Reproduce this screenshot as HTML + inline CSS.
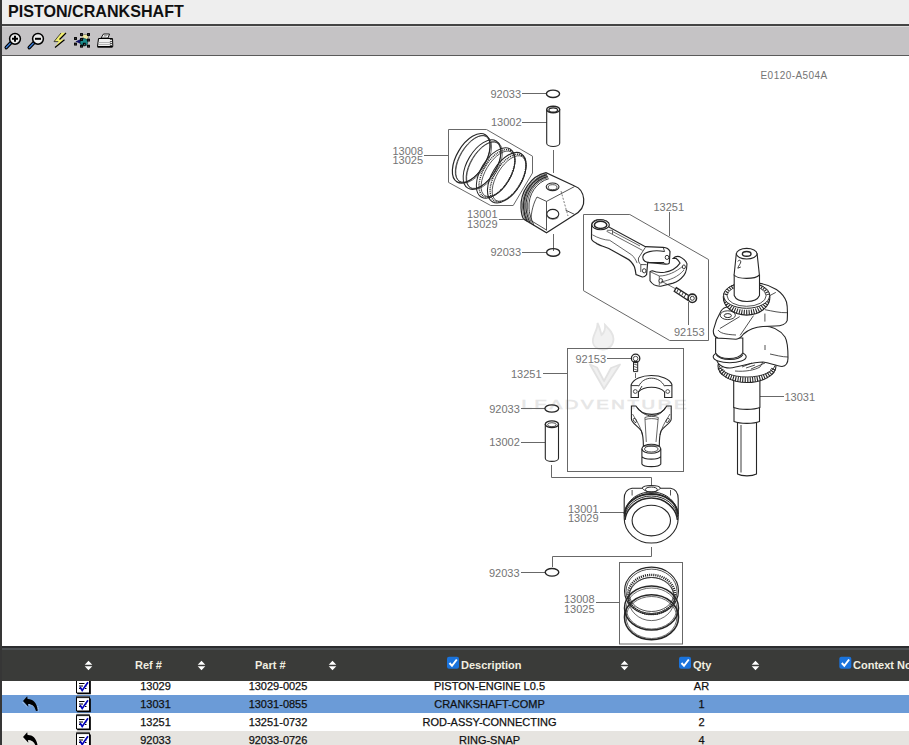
<!DOCTYPE html>
<html><head><meta charset="utf-8">
<style>
html,body{margin:0;padding:0;}
body{width:909px;height:745px;overflow:hidden;position:relative;background:#fff;font-family:"Liberation Sans",sans-serif;}
.abs{position:absolute;}
#lb{left:0;top:0;width:2px;height:745px;background:#363636;z-index:5;}
#title{left:0;top:0;width:909px;height:24px;background:#eeeeee;}
#title span{position:absolute;left:8px;top:2px;font-weight:bold;font-size:16.1px;color:#111;line-height:19px;}
#tl1{left:0;top:24px;width:909px;height:2px;background:#444;}
#tl2{left:0;top:26px;width:909px;height:1px;background:#dcdcdc;}
#tb{left:0;top:27px;width:909px;height:28px;background:#c5c3c5;}
#tl3{left:0;top:55px;width:909px;height:1px;background:#5a5a5a;}
#diag{left:0;top:56px;width:909px;height:590px;}
#th{left:0;top:646px;width:909px;height:35px;background:#3a3b39;}
#th1{left:0;top:646px;width:909px;height:2px;background:#2c2d2f;}
#th2{left:0;top:648px;width:909px;height:2px;background:#4c5053;}
.hd{position:absolute;top:658.6px;font-weight:bold;font-size:11px;color:#f0eee0;line-height:13px;white-space:nowrap;}
.sort{position:absolute;top:661px;width:8px;height:10px;}
.row{position:absolute;left:0;width:909px;height:18px;}
.cell{position:absolute;font-size:11px;color:#111;-webkit-text-stroke:0.25px #111;line-height:13px;white-space:nowrap;transform:translateX(-50%);}
.cb{position:absolute;top:656px;width:13px;height:13px;background:#1b74d8;border-radius:2px;}
</style></head>
<body>
<div id="lb" class="abs"></div>
<div id="title" class="abs"><span>PISTON/CRANKSHAFT</span></div>
<div id="tl1" class="abs"></div>
<div id="tl2" class="abs"></div>
<div id="tb" class="abs"></div>
<div id="tl3" class="abs"></div>
<svg class="abs" style="left:0;top:27px;" width="120" height="28" viewBox="0 27 120 28">
<!-- zoom in -->
<path d="M11.3 42.3L6.3 47.6" stroke="#000" stroke-width="3.6" stroke-linecap="round"/>
<path d="M11.3 42.3L6.3 47.6" stroke="#3a7bd5" stroke-width="1.4" stroke-linecap="round"/>
<circle cx="15" cy="38.8" r="5.4" fill="#ececec" stroke="#000" stroke-width="1.5"/>
<path d="M12 38.8H18 M15 35.8V41.8" stroke="#000" stroke-width="2"/>
<!-- zoom out -->
<path d="M34.3 42.3L29.3 47.6" stroke="#000" stroke-width="3.6" stroke-linecap="round"/>
<path d="M34.3 42.3L29.3 47.6" stroke="#3a7bd5" stroke-width="1.4" stroke-linecap="round"/>
<circle cx="38" cy="38.8" r="5.4" fill="#ececec" stroke="#000" stroke-width="1.5"/>
<path d="M35 38.8H41" stroke="#000" stroke-width="2"/>
<!-- lightning -->
<path d="M61 32.8H66L59.5 39.5H64.5L55 47.5L58.5 41.5H54Z" fill="#f2ee70"/>
<path d="M66 33L59.5 39.5 M64.5 39.8L55 47.5" stroke="#000" stroke-width="1.2" fill="none"/>
<path d="M61 33L54 41.6H58.3" stroke="#222" stroke-width="0.8" fill="none"/>
<!-- select -->
<path d="M82 36C84 33.5 88 34 88.5 37L87 40.5L82.5 40Z" fill="#efe9a0" stroke="#444" stroke-width="0.5"/>
<path d="M75.5 41.5L84 37.5L83 45Z" fill="#101068"/>
<circle cx="84" cy="42.3" r="3.8" fill="#1a8c8c" stroke="#063030" stroke-width="0.6"/>
<g fill="#fff" stroke="#000" stroke-width="1.1">
<rect x="80.6" y="33.6" width="1.8" height="1.8"/><rect x="87.6" y="33.6" width="1.8" height="1.8"/>
<rect x="74.6" y="37.6" width="1.8" height="1.8"/><rect x="80.6" y="38.6" width="1.8" height="1.8"/><rect x="87.6" y="39.2" width="1.8" height="1.8"/>
<rect x="74.6" y="43.2" width="1.8" height="1.8"/><rect x="83.4" y="43.3" width="1.8" height="1.8"/>
<rect x="80.6" y="45.3" width="1.8" height="1.8"/><rect x="87.6" y="45.3" width="1.8" height="1.8"/>
</g>
<!-- printer -->
<path d="M101 38L103.5 34H109.5L108 38Z" fill="#fff" stroke="#000" stroke-width="0.9"/>
<path d="M104 35.5H107.5 M103.5 36.8H106.5" stroke="#666" stroke-width="0.6"/>
<path d="M98.5 38.5H112.5L112.8 46.5H97.5Z" fill="#f0f0f0" stroke="#000" stroke-width="1"/>
<path d="M98 42.5H111 M98 44.5H111" stroke="#999" stroke-width="0.7"/>
<path d="M97.5 47H112.5" stroke="#000" stroke-width="1.4"/>
<path d="M111 39V46" stroke="#555" stroke-width="2.2" stroke-dasharray="1 1"/>
</svg>

<div id="diag" class="abs"></div>
<svg id="dg" class="abs" style="left:0;top:0;" width="909" height="745" viewBox="0 0 909 745">
<g id="wm">
<text transform="translate(521.5 409.3) scale(1.38 1)" x="0" y="0" font-family="Liberation Sans" font-size="13.6" textLength="119.5" lengthAdjust="spacing" fill="#e6e6e6" stroke="#e6e6e6" stroke-width="0.6">LEADVENTURE</text>
<path d="M597.5 323C598 329 594 333 593 339C592 345 596 349.5 602.5 349.5C609 349.5 613.5 345 613.5 339C613.5 333 609 329 605 325C605.5 330 604 333 601.5 335C600.5 331 599.5 327 597.5 323Z" fill="#f1f1f1" stroke="#e4e4e4" stroke-width="1.8"/>
<path d="M590 364.5L604 389L620 364.5L611 368L604 381L597 367.5Z" fill="#f0f0f0" stroke="#e2e2e2" stroke-width="1.8" stroke-linejoin="round"/>
</g>
<g font-family="Liberation Sans" font-size="11" fill="#747474" text-anchor="end">
<text x="521" y="97.6">92033</text>
<text x="521.5" y="126.3">13002</text>
<text x="423" y="154.6">13008</text>
<text x="423" y="163.6">13025</text>
<text x="497.5" y="218.2">13001</text>
<text x="497.5" y="227.5">13029</text>
<text x="521" y="255.5">92033</text>
<text x="684" y="210.7">13251</text>
<text x="704.5" y="336">92153</text>
<text x="606" y="362.8">92153</text>
<text x="541.5" y="377.8">13251</text>
<text x="519.8" y="412.6">92033</text>
<text x="519.8" y="445.8">13002</text>
<text x="598.5" y="513.4">13001</text>
<text x="598.5" y="522.2">13029</text>
<text x="519.5" y="576.7">92033</text>
<text x="594.5" y="603">13008</text>
<text x="594.5" y="612.5">13025</text>
<text x="815" y="400.5">13031</text>
<text x="760.5" y="79.2" font-size="10" letter-spacing="0.45" text-anchor="start">E0120-A504A</text>
</g>
<g fill="none" stroke="#686868" stroke-width="1">
<!-- leaders -->
<path d="M522 93.5H546 M522 122.5H547 M424 155.5H448 M499 219.5H523 M522 252.5H546 M669.5 212V236 M688.5 302V325 M607 358.5H631 M543 373.5H567 M521 408.5H545 M521 442.5H545 M760 396.5H784 M600 512.5H624 M521 572.5H545 M596 602.5H620"/>
<path d="M553.5 150V173 M553.5 234V251 M551.5 465V477.5H651.5V486 M651.5 547V556.5H552.5V567 M635.5 373V378"/>
<!-- boxes -->
<path d="M448.5 129.5H486.5L532.5 156.2V173L513.2 205.5H490.7L448.5 182.4Z"/>
<path d="M583.5 214.5H629.8L708.5 259.5V340.5H669.7L583.5 290.7Z"/>
<rect x="567.5" y="348.5" width="116" height="123"/>
<rect x="619.5" y="562.5" width="63" height="81.5"/>
</g>
<g id="parts" fill="none" stroke="#262626" stroke-width="1">
<!-- top snap ring -->
<ellipse cx="553" cy="93.8" rx="6.6" ry="3.7" stroke-width="1.4"/>
<!-- top pin -->
<path d="M546.7 109.5V143.2A6.5 3.3 0 0 0 559.7 143.2V109.5" stroke-width="1.1"/>
<ellipse cx="553.2" cy="109.5" rx="6.5" ry="3.3" stroke-width="1.4"/>
<ellipse cx="553.2" cy="110" rx="4.3" ry="2.1" stroke-width="1.2"/>
<!-- top rings -->
<g transform="translate(471.2 158.3) rotate(-59)"><ellipse rx="27.5" ry="14.5" stroke-width="1.2"/><ellipse cx="0.3" cy="1.6" rx="26" ry="13" stroke-width="0.7"/><ellipse cx="0.5" cy="2.6" rx="26.5" ry="13.5" stroke-width="0.6"/></g>
<g transform="translate(482 164.6) rotate(-59)"><ellipse rx="27.5" ry="14.5" stroke-width="1"/><ellipse cx="0.3" cy="1.6" rx="26" ry="13" stroke-width="0.7"/><ellipse cx="0.5" cy="2.6" rx="26.5" ry="13.5" stroke-width="0.6"/></g>
<g transform="translate(495.7 173) rotate(-59)"><ellipse rx="28" ry="15" stroke-width="1"/><ellipse cx="0.3" cy="1.2" rx="26.5" ry="13.5" stroke-width="1.4" stroke-dasharray="1 0.9"/><ellipse cx="0.5" cy="2.4" rx="25.5" ry="12.5" stroke-width="0.7"/></g>
<g transform="translate(506.8 177.7) rotate(-59)"><ellipse rx="28" ry="15" stroke-width="1.1"/><ellipse cx="0.3" cy="1.2" rx="26.5" ry="13.5" stroke-width="1.4" stroke-dasharray="1 0.9"/><ellipse cx="0.5" cy="2.4" rx="25.5" ry="12.5" stroke-width="0.7"/></g>
<!-- top piston -->
<path d="M546 172.7C531 176 520 192 521 208C521.3 213 522 216.5 523.5 219L546.5 232.8L573.5 215.5C580 212 584.5 206 583.7 199C583 192 579 187.5 574.6 186Z" fill="#fff" stroke-width="1.2"/>
<path d="M546.6 173.9C532.1 177.2 521.6 192.5 522.6 208.0C522.9 213.0 523.6 216.3 525.6 220.3" fill="none" stroke-width="0.7"/>
<path d="M546.9 174.6C532.8 177.9 522.6 192.8 523.6 208.0C523.9 213.0 524.6 216.2 526.9 221.1" fill="none" stroke-width="1.3"/>
<path d="M547.3 175.5C533.7 178.8 523.8 193.1 524.8 208.0C525.1 213.0 525.8 216.1 528.4 222.0" fill="none" stroke-width="0.7"/>
<path d="M547.8 176.4C534.5 179.8 525.0 193.5 526.0 208.0C526.3 213.0 527.0 216.0 530.0 223.0" fill="none" stroke-width="1.1"/>
<path d="M548.2 177.5C535.5 180.8 526.4 193.9 527.4 208.0C527.7 213.0 528.4 215.9 531.8 224.1" fill="none" stroke-width="0.7"/>
<path d="M548.8 178.7C536.6 182.0 528.0 194.4 529.0 208.0C529.3 213.0 530.0 215.7 533.9 225.4" fill="none" stroke-width="0.9"/>
<path d="M537 197C533.5 203 531 212 531 220.6L546.5 230" fill="none" stroke-width="0.8"/>
<path d="M546.5 201.4V230.5 M546.5 201.4L574.6 186.5 M537 197L546.5 201.4 M565.5 210.1L574.6 214.4" fill="none" stroke-width="0.8"/>
<path d="M561 191L568 216" fill="none" stroke-width="0.6" stroke-dasharray="2 1.5"/>
<ellipse cx="552.6" cy="186.8" rx="6.4" ry="3.8" fill="#fff" stroke-width="1.1"/>
<ellipse cx="552.6" cy="187.2" rx="4.4" ry="2.5" fill="none" stroke-width="0.8"/>
<ellipse cx="552.8" cy="214" rx="6" ry="4.6" fill="#fff" stroke-width="1.1"/>
<path d="M547.5 217C550 220 556 220 558.5 217" fill="none" stroke-width="0.6"/>
<!-- snap ring 2 -->
<ellipse cx="553.2" cy="252.4" rx="6.6" ry="3.8" stroke-width="1.4"/>
</g>
<g id="parts2" fill="none" stroke="#262626" stroke-width="1">
<!-- conrod 1 -->
<g fill="#fff" stroke="#262626">
<path d="M591.6 224.9C591.6 221.5 595.5 219.6 600.2 219.6C605 219.6 608.8 222 608.8 225.4V227L645.4 246.7L663.1 247.3C666.5 247.5 669 249 670 251.5L669.3 263.1C668.5 264 667 264.3 665.4 264.2L647.7 262.3L646.6 274.6C645 276.5 643 277.3 641.7 276.8L636 274.5C635.5 271 635 268.5 634.4 266.8C632 262 630 260 627 258.6L608.8 248.5C603 246 598 245 596 243C593 241.5 591.5 240 591.5 238.5Z" stroke-width="1.2"/>
<path d="M664.6 251.5C653 249.5 643 252 642.8 257C642.6 261 646 262.6 650 262.6L664 262.5" fill="none" stroke-width="1.1"/>
<path d="M646.6 264.6H640.8L640.8 272 M640.8 264.6C639 263 638 261 638.5 258L645.4 247.3 M663.1 247.3L664.6 251.5 M665.4 264.2L664 262.5" fill="none" stroke-width="0.8"/>
<ellipse cx="600.6" cy="224.8" rx="8.7" ry="5" stroke-width="1.1"/>
<ellipse cx="600.6" cy="224.9" rx="6.2" ry="3.6" stroke-width="1.5"/>
<path d="M606.5 231.2L642.6 250.4 M612.5 231.5L640 246 M592.4 234.8C598 238 604 240 609.7 240.3L631.7 254.9C634 257 636 260 637.1 263.1 M607 230.3H612.5V234" fill="none" stroke-width="0.7"/>
<ellipse cx="644.2" cy="270.8" rx="1.8" ry="2.1" stroke-width="0.9"/>
<ellipse cx="667" cy="257.4" rx="1.8" ry="2.1" stroke-width="0.9"/>
</g>
<!-- cap 1 -->
<g fill="#fff" stroke="#262626">
<path d="M673.1 258.5C675 256.5 677 256 679.3 256.6C683 258.5 686 261 687 263.9L686.5 269C686 272 685 274 683.9 275.4C681 279 677 282 673.1 283.1L660.8 286.2C656 286.5 652 284 650 280.8V271.6C651 271 652 270.8 652.3 270.8C656 272.5 660 272.8 664.6 272.3C672 271 677 267.5 680 263.1C679 261 677.5 259.5 676.2 258.5Z" stroke-width="1.1"/>
<path d="M650 271.6L659.3 276V285.4 M659.3 276C667 276 676 272 683 266 M661 282C670 280 678 277 684 270" fill="none" stroke-width="0.7"/>
<ellipse cx="660.8" cy="280.8" rx="1.9" ry="2.2" stroke-width="0.9"/>
<ellipse cx="683.9" cy="266.9" rx="1.5" ry="2" stroke-width="0.9"/>
</g>
<!-- bolt 1 -->
<g fill="#fff" stroke="#262626">
<path d="M661 281L676 289" fill="none" stroke-width="0.7"/>
<path d="M676.3 287.6L689.8 296.3L687.6 300.1L674.2 291.4Z" stroke-width="1.3"/>
<path d="M678.5 288.8L676.8 292.2 M681 290.4L679.3 293.8 M683.5 292L681.8 295.4 M686 293.6L684.3 297" fill="none" stroke-width="0.9"/>
<circle cx="692.3" cy="298.3" r="4.2" stroke-width="1.6"/>
<circle cx="692.3" cy="298.3" r="2" stroke-width="0.9"/>
</g>
<!-- crankshaft -->
<g fill="#fff" stroke="#262626">
<!-- lower shaft -->
<path d="M737.5 421V474C742 476.5 752 476.5 756.5 474V421Z" stroke-width="1.1"/>
<path d="M741 425V472.5" stroke-width="0.9"/>
<path d="M734 407V421.5C740 424 754 424 759.5 421.5V407Z" stroke-width="1.1"/>
<path d="M733.7 380V407.5C740 410 754 410 759.9 407.5V380Z" stroke-width="1.1"/>
<!-- lower gear -->
<path d="M718 366C718 375 731 382.5 747 382.5C763 382.5 776 375 776 366C776 360 764 355 747 355C730 355 718 360 718 366Z" stroke-width="1.1"/>
<path d="M720 368C722.5 375 733 379.8 747 379.8C761 379.8 771.5 375 774 368" fill="none" stroke-width="5" stroke-dasharray="1.1 1.3"/>
<path d="M719 365.5C721 372 732 377 747 377C762 377 773 372 775 365.5" fill="none" stroke-width="0.9"/>
<!-- lower web -->
<path d="M742 334C750 328 756 326 763 326C772 326 780 330 785 337C788 342 788 350 788 358C788 363 786 366 782 366.5C776 366 770 363 763 362C752 362 740 367 730 368C722 368 716 364 716 356L716 340Z" stroke-width="1.1"/>
<path d="M763 362L760 367C755 370 745 372 735 371 M742 367L752 363 M751 369L765 363 M770 354C775 355 782 357 788 357" fill="none" stroke-width="0.8"/>
<path d="M765 345V350 M746 368L755 365" fill="none" stroke-width="0.8"/>
<!-- crankpin -->
<ellipse cx="729.7" cy="356.8" rx="16.5" ry="6" stroke-width="1.1"/>
<path d="M716 354.5C719 358.5 724 359.5 729.5 359.5C736 359.5 741 358 743 354.5" fill="none" stroke-width="1.1"/>
<path d="M715.6 338V353C718 357 724 358.5 729 358.5C735 358.5 740 357 742.8 353V338Z" stroke-width="1.1"/>
<!-- upper web -->
<path d="M759.5 283.4C772 285 783 292 786.5 302C788 308 787.5 315 787.2 320.6C786 324 781 326 775 326L763 326.5C755 327 748 330 743.5 334C741 337.5 739 339 736 339.2L718 338C714.5 337 713 334 713.4 330C715 323 718 316 721 311C723 308 725 307 728 307L735 300Z" stroke-width="1.1"/>
<path d="M764.9 313.6V321.6 M769.4 295.8L775.8 292.4 M739.7 316.6L719.9 328.5 M753.5 315.6L740.1 335.4 M718 330C720 333 725 334.5 736 335 M765 309.7C772 311 780 313 787 312.7" fill="none" stroke-width="0.8"/>
<ellipse cx="727.8" cy="315.2" rx="7.6" ry="4.4" stroke-width="0.9"/>
<ellipse cx="727.8" cy="315.6" rx="3.6" ry="2" stroke-width="1"/>
<!-- upper gear -->
<path d="M723.3 297C723.3 307 733.5 315.1 746.6 315.1C759.7 315.1 769.9 307 769.9 297C769.9 289 759.7 283 746.6 283C733.5 283 723.3 289 723.3 297Z" stroke-width="1.1"/>
<path d="M725.5 299C727 307 736 312.3 746.6 312.3C757.2 312.3 766 307 767.7 299" fill="none" stroke-width="5" stroke-dasharray="1.1 1.3"/>
<ellipse cx="746.6" cy="295.5" rx="23" ry="12.8" stroke-width="1"/>
<path d="M726 295C727.5 290 731.5 287 737 285.5 M756.5 285.5C762 287 766 290 767.5 295" fill="none" stroke-width="3.5" stroke-dasharray="1.1 1.3"/>
<ellipse cx="746.6" cy="295.8" rx="19.5" ry="10.5" stroke-width="0.8"/>
<!-- shaft -->
<path d="M734.2 275V295.5C736 300 741 301.5 747 301.5C753 301.5 757.5 300 759.5 295.5V275Z" stroke-width="1.1"/>
<path d="M736.3 253.7L734.1 275C738 279.5 755 279.5 759.4 275L757.1 253.7Z" stroke-width="1.1"/>
<ellipse cx="746.7" cy="253.7" rx="10.3" ry="5.3" stroke-width="1.1"/>
<ellipse cx="746.7" cy="253.9" rx="4.3" ry="2.4" stroke-width="1.4"/>
<path d="M737.8 261.5C738.5 259.8 740.8 259.8 740.8 261.8C740.8 263.5 738.5 265.5 737.8 268.2L740.8 267" fill="none" stroke-width="0.9"/>
</g>
<!-- second con-rod box -->
<path d="M633.5 361.5V371.6H637.7V361.5Z" stroke-width="1"/>
<path d="M633.8 364L637.5 365.2 M633.8 366.5L637.5 367.7 M633.8 369L637.5 370.2" stroke-width="0.7"/>
<circle cx="635.6" cy="358.4" r="4.2" stroke-width="1.3"/>
<circle cx="635.6" cy="358.6" r="2.3" stroke-width="0.8"/>
<path d="M631.1 397.5V385C633 379 642 375.5 651.3 375.5C661 375.5 670 379 671.9 384.5V397.5H664.6V392C662 389 657 387.3 651.5 387.3C646 387.3 641 389 638.4 392V397.5Z" stroke-width="1.1"/>
<path d="M638.7 386.3C641 381 646 378.2 651.3 378.2C657 378.2 662 381 664.6 386.3 M631.1 385.6H638.7 M664.6 385.6H671.9 M638.4 392L642 386" fill="none" stroke-width="0.9"/>
<circle cx="635.3" cy="391.5" r="1.9" stroke-width="0.8"/>
<circle cx="667.7" cy="391.5" r="1.9" stroke-width="0.8"/>
<path d="M631.4 406H635.9C639 411.5 645 414.4 651.8 414.4C658.5 414.4 664 411.5 666.7 406H671.2V418.9C671.2 423 664 426 661 431C659.5 435 659.3 440 659.3 446L643.4 446C643.4 440 643 435 641.4 431C638 426 631.4 423 631.4 418.9Z" stroke-width="1.1"/>
<path d="M637.5 407.5C640.5 412.5 646 415.9 651.8 415.9C657.5 415.9 663 412.5 665.2 407.5" fill="none" stroke-width="0.9"/>
<path d="M644.9 417.5L646.3 442 M658.3 417.5L656 442 M644.9 417.5C648 416 655 416 658.3 417.5 M645.3 419.5C648.5 418.3 654.5 418.3 658 419.5 M632.5 414C636 420 640 425 642.5 435 M670 414C666.5 420 662.5 425 660 435" fill="none" stroke-width="0.7"/>
<ellipse cx="634.9" cy="420.4" rx="1.3" ry="2.3" transform="rotate(-30 634.9 420.4)" stroke-width="0.8"/>
<ellipse cx="667.7" cy="420.4" rx="1.3" ry="2.3" transform="rotate(30 667.7 420.4)" stroke-width="0.8"/>
<path d="M641.9 448.7V464C643.5 467.5 659 467.5 660.8 464V448.7 M641.9 456.5C644 460 658.5 460 660.8 456.5" stroke-width="1.1"/>
<ellipse cx="651.3" cy="448.7" rx="9.4" ry="4.5" stroke-width="1.1"/>
<ellipse cx="651.3" cy="449" rx="6.8" ry="3" stroke-width="0.8"/>
<!-- snap ring 3 + pin 2 -->
<ellipse cx="551.8" cy="408.5" rx="6.9" ry="3.7" stroke-width="1.3"/>
<path d="M545.3 424V458.2A6.6 3.2 0 0 0 558.5 458.2V424" stroke-width="1.1"/>
<ellipse cx="551.9" cy="424.2" rx="6.6" ry="3.3" stroke-width="1.4"/>
<ellipse cx="551.9" cy="424.7" rx="4.3" ry="2" stroke-width="0.8"/>
<!-- piston 2 -->
<path d="M624.2 518.3V499C624.2 493 627 489 632 488.2H642.2C643 486 647 485.5 651.3 485.5C655.6 485.5 659.6 486 660.4 488.2H670.5C675.5 489 678.2 493 678.2 499V518.3C678.2 532 666 543 651.3 543C636.6 543 624.2 532 624.2 518.3Z" fill="#fff" stroke-width="1.1"/>
<path d="M632.1 490V495.5 M670.5 490V495.5 M642.2 488.2C644 491 648 492 651.3 492C654.6 492 658.6 491 660.4 488.2" fill="none" stroke-width="0.8"/>
<ellipse cx="651.3" cy="489.6" rx="6" ry="2.6" fill="none" stroke-width="1"/>
<path d="M624.4 516C625 502 636 492 651.3 492C666.6 492 677.5 502 678 516" fill="none" stroke-width="1"/>
<path d="M624.6 514C625.5 502.5 637 494 651.3 494C665.6 494 677 502.5 677.8 514" fill="none" stroke-width="2"/>
<path d="M624.8 517C626 505 637.5 496 651.3 496C665 496 676.5 505 677.6 517" fill="none" stroke-width="1"/>
<path d="M625 520C626.5 507.5 638 498 651.3 498C664.6 498 676 507.5 677.4 520" fill="none" stroke-width="1.5"/>
<ellipse cx="651.3" cy="520.6" rx="19.2" ry="15.3" fill="none" stroke-width="1.1"/>
<!-- snap ring 4 -->
<ellipse cx="552" cy="572.3" rx="6.8" ry="3.8" stroke-width="1.4"/>
<!-- rings 2 -->
<ellipse cx="651.5" cy="617.2" rx="27" ry="22.5" stroke-width="1.6"/>
<ellipse cx="651.5" cy="617.5" rx="25.3" ry="21" stroke-width="0.7"/>
<ellipse cx="651.5" cy="608" rx="27" ry="22" stroke-width="1.5"/>
<ellipse cx="651.5" cy="608.5" rx="25.3" ry="20.5" stroke-width="0.7"/>
<ellipse cx="651.5" cy="590.8" rx="27" ry="23.7" stroke-width="1.1"/>
<ellipse cx="651.5" cy="591.3" rx="25.5" ry="22.2" stroke-width="0.8"/>
<ellipse cx="651.5" cy="594.5" rx="23.5" ry="19.6" stroke-width="2.4" stroke-dasharray="1.1 1"/>
<ellipse cx="651.5" cy="594.5" rx="22" ry="17" stroke-width="0.8"/>
<ellipse cx="651.5" cy="599" rx="23" ry="21.6" stroke-width="0.7"/>
<!-- table rows -->
<div class="row" style="top:677px;background:#fff;"></div>
<div class="row" style="top:695px;background:#6b9bd7;"></div>
<div class="row" style="top:713px;background:#fff;"></div>
<div class="row" style="top:731px;background:#e6e4e0;"></div>

<svg class="abs" style="left:0;top:677px;" width="120" height="68" viewBox="0 677 120 68">
<g transform="translate(76 677.5)">
<path d="M0.5 2V15.5H13.5V2Z" fill="#fff" stroke="#000" stroke-width="1"/>
<path d="M14.2 3V16.2H1.2" stroke="#000" stroke-width="1.3" fill="none"/>
<path d="M0.5 1.5H13.5" stroke="#000" stroke-width="2.2"/>
<path d="M1.5 1.3H13" stroke="#fff" stroke-width="1" stroke-dasharray="1 1"/>
<path d="M3 6H8.5 M3 8.5H7 M9.5 8.5H10.5 M3 11H5.5 M9 11H10.5" stroke="#000" stroke-width="1"/>
<path d="M4 9.5L6.2 13L12 4.8" stroke="#0000b8" stroke-width="1.7" fill="none"/>
</g><g transform="translate(76 695.5)">
<path d="M0.5 2V15.5H13.5V2Z" fill="#fff" stroke="#000" stroke-width="1"/>
<path d="M14.2 3V16.2H1.2" stroke="#000" stroke-width="1.3" fill="none"/>
<path d="M0.5 1.5H13.5" stroke="#000" stroke-width="2.2"/>
<path d="M1.5 1.3H13" stroke="#fff" stroke-width="1" stroke-dasharray="1 1"/>
<path d="M3 6H8.5 M3 8.5H7 M9.5 8.5H10.5 M3 11H5.5 M9 11H10.5" stroke="#000" stroke-width="1"/>
<path d="M4 9.5L6.2 13L12 4.8" stroke="#0000b8" stroke-width="1.7" fill="none"/>
</g><g transform="translate(76 713.5)">
<path d="M0.5 2V15.5H13.5V2Z" fill="#fff" stroke="#000" stroke-width="1"/>
<path d="M14.2 3V16.2H1.2" stroke="#000" stroke-width="1.3" fill="none"/>
<path d="M0.5 1.5H13.5" stroke="#000" stroke-width="2.2"/>
<path d="M1.5 1.3H13" stroke="#fff" stroke-width="1" stroke-dasharray="1 1"/>
<path d="M3 6H8.5 M3 8.5H7 M9.5 8.5H10.5 M3 11H5.5 M9 11H10.5" stroke="#000" stroke-width="1"/>
<path d="M4 9.5L6.2 13L12 4.8" stroke="#0000b8" stroke-width="1.7" fill="none"/>
</g><g transform="translate(76 731.5)">
<path d="M0.5 2V15.5H13.5V2Z" fill="#fff" stroke="#000" stroke-width="1"/>
<path d="M14.2 3V16.2H1.2" stroke="#000" stroke-width="1.3" fill="none"/>
<path d="M0.5 1.5H13.5" stroke="#000" stroke-width="2.2"/>
<path d="M1.5 1.3H13" stroke="#fff" stroke-width="1" stroke-dasharray="1 1"/>
<path d="M3 6H8.5 M3 8.5H7 M9.5 8.5H10.5 M3 11H5.5 M9 11H10.5" stroke="#000" stroke-width="1"/>
<path d="M4 9.5L6.2 13L12 4.8" stroke="#0000b8" stroke-width="1.7" fill="none"/>
</g><g transform="translate(22 696)">
<path d="M0.8 6.3L5.3 10.9 M6.8 8.7C10 8.8 12.3 10.3 13.6 12.8 M15.8 10.5L16.2 15.5" stroke="#fff" stroke-width="0.8" stroke-dasharray="0.8 0.8" fill="none"/><path d="M1 5L5.2 0.3L5.6 3C10.5 2.8 14.8 6 15.8 14.8L14 15C12.8 10.5 10 8 6 8L6.3 10.8Z" fill="#000"/>
</g><g transform="translate(22 732)">
<path d="M0.8 6.3L5.3 10.9 M6.8 8.7C10 8.8 12.3 10.3 13.6 12.8 M15.8 10.5L16.2 15.5" stroke="#fff" stroke-width="0.8" stroke-dasharray="0.8 0.8" fill="none"/><path d="M1 5L5.2 0.3L5.6 3C10.5 2.8 14.8 6 15.8 14.8L14 15C12.8 10.5 10 8 6 8L6.3 10.8Z" fill="#000"/>
</g></svg>
<div class="cell" style="left:155.5px;top:680px;">13029</div>
<div class="cell" style="left:278px;top:680px;">13029-0025</div>
<div class="cell" style="left:489.5px;top:680px;">PISTON-ENGINE L0.5</div>
<div class="cell" style="left:701.5px;top:680px;">AR</div>

<div class="cell" style="left:155.5px;top:698px;">13031</div>
<div class="cell" style="left:278px;top:698px;">13031-0855</div>
<div class="cell" style="left:489.5px;top:698px;">CRANKSHAFT-COMP</div>
<div class="cell" style="left:701.5px;top:698px;">1</div>

<div class="cell" style="left:155.5px;top:716px;">13251</div>
<div class="cell" style="left:278px;top:716px;">13251-0732</div>
<div class="cell" style="left:489.5px;top:716px;">ROD-ASSY-CONNECTING</div>
<div class="cell" style="left:701.5px;top:716px;">2</div>

<div class="cell" style="left:155.5px;top:734px;">92033</div>
<div class="cell" style="left:278px;top:734px;">92033-0726</div>
<div class="cell" style="left:489.5px;top:734px;">RING-SNAP</div>
<div class="cell" style="left:701.5px;top:734px;">4</div>

<!-- table header -->
<div id="th" class="abs"></div>
<div id="th1" class="abs"></div>
<div id="th2" class="abs"></div>
<svg class="abs" style="left:0;top:646px;" width="909" height="35" viewBox="0 646 909 35">
<path d="M84.7 664.8L88.5 660.8L92.3 664.8Z M84.7 666.3L88.5 670.3L92.3 666.3Z" fill="#fff"/>
<path d="M197.7 664.8L201.5 660.8L205.3 664.8Z M197.7 666.3L201.5 670.3L205.3 666.3Z" fill="#fff"/>
<path d="M328.7 664.8L332.5 660.8L336.3 664.8Z M328.7 666.3L332.5 670.3L336.3 666.3Z" fill="#fff"/>
<path d="M620.7 664.8L624.5 660.8L628.3 664.8Z M620.7 666.3L624.5 670.3L628.3 666.3Z" fill="#fff"/>
<path d="M751.7 664.8L755.5 660.8L759.3 664.8Z M751.7 666.3L755.5 670.3L759.3 666.3Z" fill="#fff"/>
<rect x="447" y="656.8" width="12" height="12" rx="2" fill="#1a73dc"/><path d="M449.5 663L452 665.8L456.8 659.5" stroke="#fff" stroke-width="2" fill="none"/>
<rect x="679" y="656.8" width="12" height="12" rx="2" fill="#1a73dc"/><path d="M681.5 663L684 665.8L688.8 659.5" stroke="#fff" stroke-width="2" fill="none"/>
<rect x="839.3" y="656.8" width="12" height="12" rx="2" fill="#1a73dc"/><path d="M841.8 663L844.3 665.8L849.0999999999999 659.5" stroke="#fff" stroke-width="2" fill="none"/>
</svg>
<div class="hd" style="left:135px;">Ref #</div>
<div class="hd" style="left:255px;">Part #</div>
<div class="hd" style="left:461px;">Description</div>
<div class="hd" style="left:693px;">Qty</div>
<div class="hd" style="left:853px;">Context No</div>

</body></html>
